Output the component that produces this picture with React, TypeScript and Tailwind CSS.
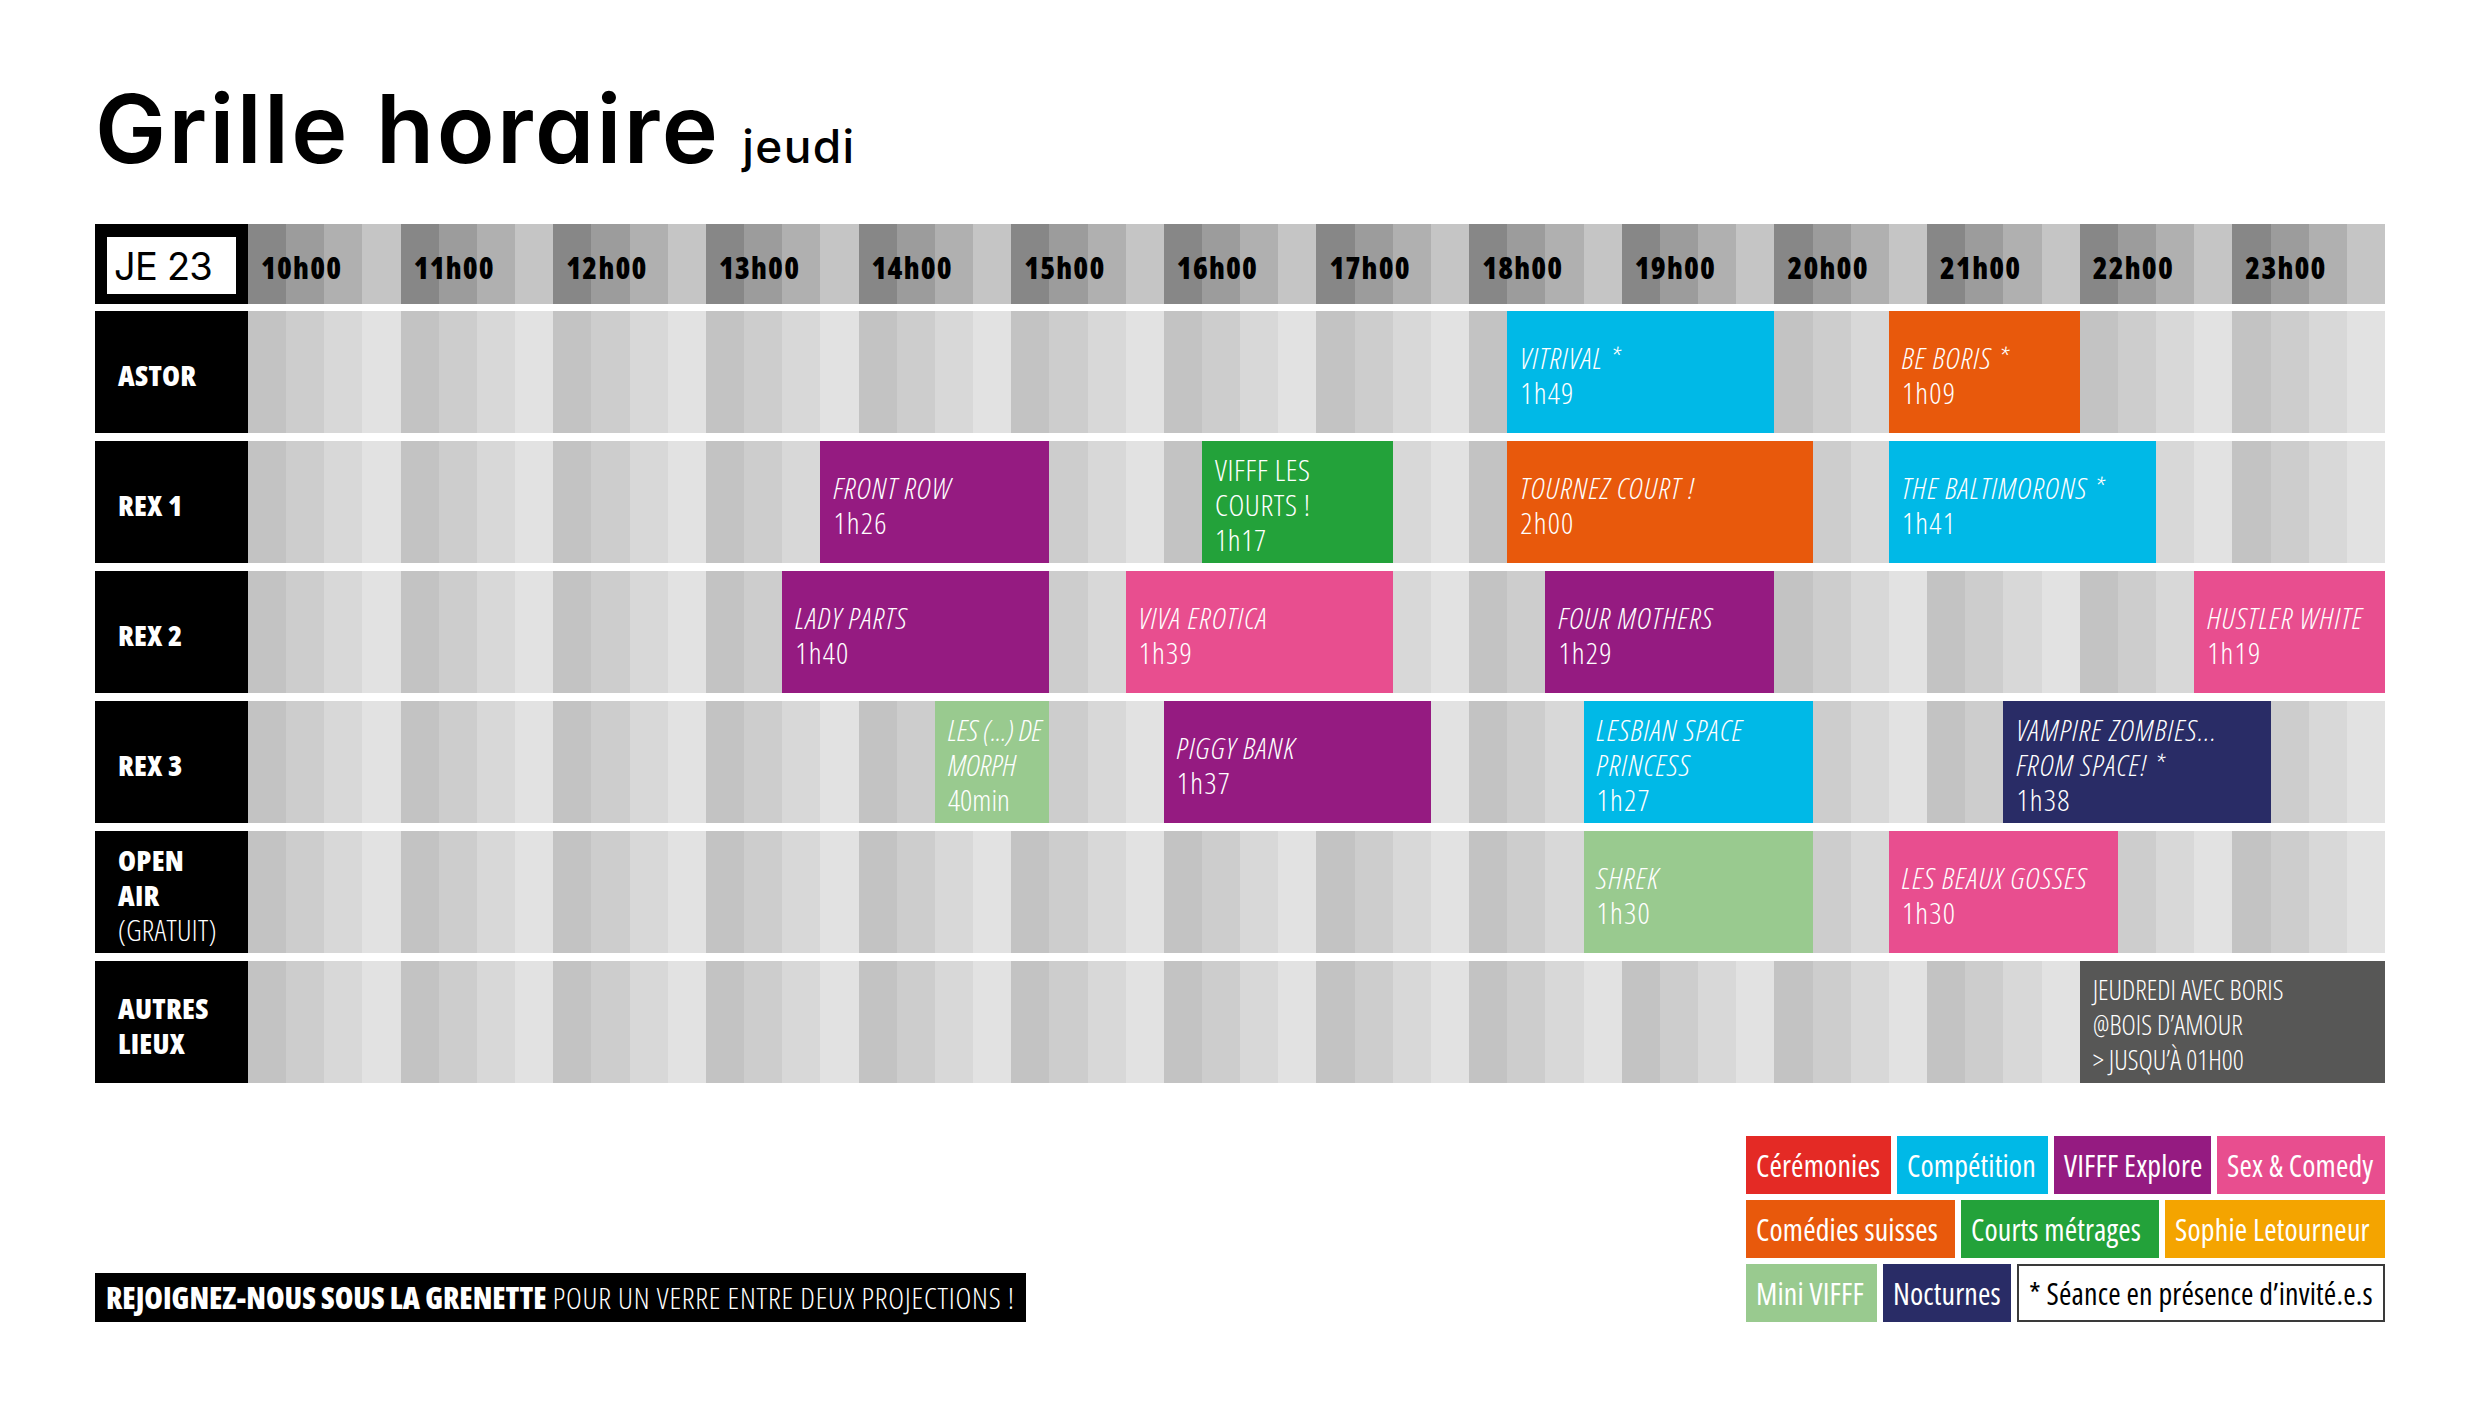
import React from 'react';

type Ev = {
  start: number; // quarter index from 10h00
  span: number;
  color: string;
  lines: string[];
  dur?: string;
  upright?: boolean;
  text?: string; // override for size / tracking
};

type Room = {
  name: string[];
  sub?: string;
  events: Ev[];
};

const HOURS = ['10h00', '11h00', '12h00', '13h00', '14h00', '15h00', '16h00', '17h00', '18h00', '19h00', '20h00', '21h00', '22h00', '23h00'];
const QUARTERS = Array.from({ length: 56 }, (_, i) => i);

const headerShades = ['bg-[#878787]', 'bg-[#9c9c9c]', 'bg-[#b0b0b0]', 'bg-[#c5c5c5]'];
const bodyShades = ['bg-[#c3c3c3]', 'bg-[#cdcdcd]', 'bg-[#d8d8d8]', 'bg-[#e2e2e2]'];

const CYAN = 'bg-[#00b9e7]';
const ORANGE = 'bg-[#e8590c]';
const PURPLE = 'bg-[#951b81]';
const GREEN = 'bg-[#23a23a]';
const PINK = 'bg-[#e84e8f]';
const MINT = 'bg-[#99ca8f]';
const NAVY = 'bg-[#292c66]';
const GREY = 'bg-[#575756]';

const rooms: Room[] = [
  {
    name: ['ASTOR'],
    events: [
      { start: 33, span: 7, color: CYAN, lines: ['VITRIVAL *'], dur: '1h49' },
      { start: 43, span: 5, color: ORANGE, lines: ['BE BORIS *'], dur: '1h09' },
    ],
  },
  {
    name: ['REX 1'],
    events: [
      { start: 15, span: 6, color: PURPLE, lines: ['FRONT ROW'], dur: '1h26' },
      { start: 25, span: 5, color: GREEN, lines: ['VIFFF LES', 'COURTS !'], dur: '1h17', upright: true, text: 'text-[30px] tracking-[0.02em]' },
      { start: 33, span: 8, color: ORANGE, lines: ['TOURNEZ COURT !'], dur: '2h00' },
      { start: 43, span: 7, color: CYAN, lines: ['THE BALTIMORONS *'], dur: '1h41' },
    ],
  },
  {
    name: ['REX 2'],
    events: [
      { start: 14, span: 7, color: PURPLE, lines: ['LADY PARTS'], dur: '1h40' },
      { start: 23, span: 7, color: PINK, lines: ['VIVA EROTICA'], dur: '1h39' },
      { start: 34, span: 6, color: PURPLE, lines: ['FOUR MOTHERS'], dur: '1h29' },
      { start: 51, span: 5, color: PINK, lines: ['HUSTLER WHITE'], dur: '1h19' },
    ],
  },
  {
    name: ['REX 3'],
    events: [
      { start: 18, span: 3, color: MINT, lines: ['LES (...) DE', 'MORPH'], dur: '40min', text: 'text-[30px] tracking-normal' },
      { start: 24, span: 7, color: PURPLE, lines: ['PIGGY BANK'], dur: '1h37' },
      { start: 35, span: 6, color: CYAN, lines: ['LESBIAN SPACE', 'PRINCESS'], dur: '1h27' },
      { start: 46, span: 7, color: NAVY, lines: ['VAMPIRE ZOMBIES...', 'FROM SPACE! *'], dur: '1h38' },
    ],
  },
  {
    name: ['OPEN', 'AIR'],
    sub: '(GRATUIT)',
    events: [
      { start: 35, span: 6, color: MINT, lines: ['SHREK'], dur: '1h30' },
      { start: 43, span: 6, color: PINK, lines: ['LES BEAUX GOSSES'], dur: '1h30' },
    ],
  },
  {
    name: ['AUTRES', 'LIEUX'],
    events: [
      {
        start: 48,
        span: 8,
        color: GREY,
        lines: ['JEUDREDI AVEC BORIS', '@BOIS D\u2019AMOUR', '> JUSQU\u2019\u00c0 01H00'],
        upright: true,
        text: 'text-[27px] tracking-normal',
      },
    ],
  },
];

const legend: { label: string; cls: string; w: string }[][] = [
  [
    { label: 'Cérémonies', cls: 'bg-[#e42a25] text-white', w: 'w-[145px]' },
    { label: 'Compétition', cls: 'bg-[#00b9e7] text-white', w: 'w-[151px]' },
    { label: 'VIFFF Explore', cls: 'bg-[#951b81] text-white', w: 'w-[157px]' },
    { label: 'Sex & Comedy', cls: 'bg-[#e84e8f] text-white', w: 'w-[168px]' },
  ],
  [
    { label: 'Comédies suisses', cls: 'bg-[#e8590c] text-white', w: 'w-[209px]' },
    { label: 'Courts métrages', cls: 'bg-[#23a23a] text-white', w: 'w-[198px]' },
    { label: 'Sophie Letourneur', cls: 'bg-[#f4a400] text-white', w: 'w-[220px]' },
  ],
  [
    { label: 'Mini VIFFF', cls: 'bg-[#99ca8f] text-white', w: 'w-[131px]' },
    { label: 'Nocturnes', cls: 'bg-[#292c66] text-white', w: 'w-[128px]' },
    { label: '* Séance en présence d\u2019invité.e.s', cls: 'bg-white text-black border-2 border-[#3a3a3a]', w: 'w-[368px]' },
  ],
];

// Open Sans condensed instance
const cond = "font-['Open_Sans'] [font-stretch:75%]";

function Stripes({ shades }: { shades: string[] }) {
  return (
    <>
      {QUARTERS.map((q) => (
        <div key={q} className={shades[q % 4]} style={{ gridColumn: q + 1, gridRow: 1 }} />
      ))}
    </>
  );
}

function EventBlock({ ev }: { ev: Ev }) {
  return (
    <div
      className={`${ev.color} flex flex-col justify-center pl-[13px] pt-[5px] text-white leading-[35px] font-light whitespace-nowrap overflow-hidden ${cond} ${ev.text ?? 'text-[30px] tracking-[0.04em]'}`}
      style={{ gridColumn: `${ev.start + 1} / span ${ev.span}`, gridRow: 1 }}
    >
      {ev.lines.map((l) => (
        <div key={l} className={ev.upright ? '' : 'italic'}>{l}</div>
      ))}
      {ev.dur && <div>{ev.dur}</div>}
    </div>
  );
}

export default function App() {
  return (
    <div className="min-h-screen bg-white pl-[95px] pt-[81px]">
      <div className="flex items-baseline gap-[22px] text-black font-['Inter'] [font-feature-settings:'cv11']">
        <h1 className="text-[95px] leading-none font-semibold tracking-[0.025em]">Grille horaire</h1>
        <span className="text-[46px] leading-none font-medium tracking-[0.03em]">jeudi</span>
      </div>

      <div className="mt-[48px] w-[2290px] flex flex-col">
        {/* header */}
        <div className="grid grid-cols-[153px_1fr] h-[80px]">
          <div className="bg-black pt-[13px] pb-[10px] px-[12px]">
            <div className="h-full bg-white flex items-center pl-[7px] font-['Inter'] text-[38px] leading-none tracking-[-0.02em] text-black">
              JE 23
            </div>
          </div>
          <div className="grid grid-cols-[repeat(56,minmax(0,1fr))]">
            <Stripes shades={headerShades} />
            {HOURS.map((h, i) => (
              <div
                key={h}
                className={`flex items-center pl-[13px] pt-[7px] text-[30px] tracking-[0.04em] font-extrabold text-black ${cond}`}
                style={{ gridColumn: `${i * 4 + 1} / span 4`, gridRow: 1 }}
              >
                {h}
              </div>
            ))}
          </div>
        </div>

        {/* rooms */}
        <div className="mt-[7px] flex flex-col gap-[8px]">
          {rooms.map((r) => (
            <div key={r.name.join(' ')} className="grid grid-cols-[153px_1fr] h-[122px]">
              <div className={`bg-black flex flex-col justify-center pl-[23px] pt-[5px] text-white text-[29px] leading-[35px] tracking-[0.01em] ${cond}`}>
                {r.name.map((n) => (
                  <div key={n} className="font-extrabold">{n}</div>
                ))}
                {r.sub && <div className="font-light">{r.sub}</div>}
              </div>
              <div className="grid grid-cols-[repeat(56,minmax(0,1fr))]">
                <Stripes shades={bodyShades} />
                {r.events.map((ev) => (
                  <EventBlock key={ev.lines[0]} ev={ev} />
                ))}
              </div>
            </div>
          ))}
        </div>

        {/* footer */}
        <div className="mt-[53px] flex justify-between items-end">
          <div className={`bg-black h-[49px] w-[931px] flex items-center pl-[11px] text-white text-[30px] whitespace-nowrap ${cond}`}>
            <span className="font-extrabold">REJOIGNEZ-NOUS SOUS LA GRENETTE</span>
            <span className="font-light tracking-[0.025em]">&nbsp;POUR UN VERRE ENTRE DEUX PROJECTIONS !</span>
          </div>
          <div className="flex flex-col gap-[6px]">
            {legend.map((row, ri) => (
              <div key={ri} className="flex gap-[6px]">
                {row.map((item) => (
                  <div
                    key={item.label}
                    className={`${item.cls} ${item.w} h-[58px] flex items-center pl-[10px] text-[30px] tracking-[0.005em] whitespace-nowrap ${cond}`}
                  >
                    {item.label}
                  </div>
                ))}
              </div>
            ))}
          </div>
        </div>
      </div>
    </div>
  );
}
